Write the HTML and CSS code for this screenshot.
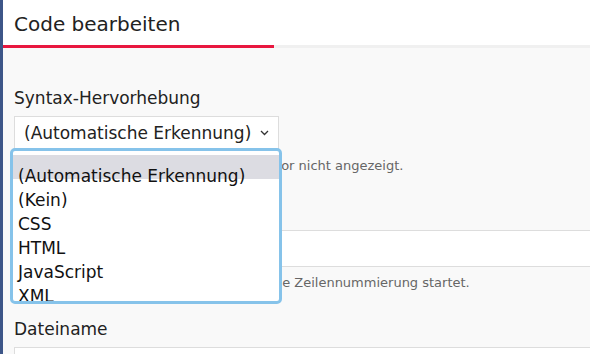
FILE: index.html
```html
<!DOCTYPE html>
<html lang="de">
<head>
<meta charset="utf-8">
<title>Code bearbeiten</title>
<link rel="stylesheet" href="styles.css">
</head>
<body>
<div class="shell">
  <div class="sidebar"></div>
  <main class="main">
    <header class="header">
      <h1 class="title">Code bearbeiten</h1>
    </header>
    <div class="tabline"><span class="tab-active"></span><span class="tab-rest"></span></div>
    <form class="form">
      <div class="field">
        <label class="label">Syntax-Hervorhebung</label>
        <div class="select">
          <span class="select-value">(Automatische Erkennung)</span>
          <svg class="chevron" width="9" height="6" viewBox="0 0 9 6"><path d="M1 1l3.5 3.5L8 1" fill="none" stroke="#333" stroke-width="1.3"/></svg>
        </div>
        <div class="listbox">
          <div class="option">(Automatische Erkennung)</div>
          <div class="option">(Kein)</div>
          <div class="option">CSS</div>
          <div class="option">HTML</div>
          <div class="option">JavaScript</div>
          <div class="option">XML</div>
        </div>
        <p class="help">Bei „Kein“ wird die Hervorhebung im Editor nicht angezeigt.</p>
      </div>
      <div class="field">
        <label class="label">Erste Zeilennummer</label>
        <div class="input input-tall"></div>
        <p class="help">Geben Sie die Startnummer an, ab der die Zeilennummierung startet.</p>
      </div>
      <div class="field">
        <label class="label">Dateiname</label>
        <div class="input"></div>
      </div>
    </form>
  </main>
</div>
</body>
</html>
```
FILE: styles.css
```css
html, body {
  margin: 0;
  padding: 0;
  overflow: hidden;
}
body {
  background: #f9f9f9;
  font-family: "DejaVu Sans", "Noto Sans", sans-serif;
  color: #222;
}
.shell {
  display: flex;
  min-height: 354px;
}
.sidebar {
  width: 3px;
  flex: none;
  background: #3d5688;
}
.main {
  flex: 1;
  min-width: 0;
}
.header {
  background: #fff;
  height: 45px;
  padding-left: 11px;
  display: flex;
  align-items: flex-end;
}
.title {
  margin: 0 0 8px;
  font-size: 20px;
  font-weight: normal;
  line-height: 26px;
  color: #222;
}
.tabline {
  display: flex;
  height: 3px;
}
.tab-active {
  width: 271px;
  background: #e8173f;
}
.tab-rest {
  flex: 1;
  background: #f0f0f0;
}
.form {
  padding: 39px 0 0 11px;
}
.field {
  position: relative;
  margin-bottom: 26px;
}
.label {
  display: block;
  font-size: 17px;
  line-height: 22px;
  margin-bottom: 7px;
  color: #222;
}
.select {
  box-sizing: border-box;
  width: 265px;
  height: 34px;
  background: #fff;
  border: 1px solid #ddd;
  display: flex;
  align-items: center;
  justify-content: space-between;
  padding: 0 9px;
  font-size: 17px;
}
.select-value {
  color: #222;
  white-space: nowrap;
}
.chevron {
  flex: none;
}
.listbox {
  position: absolute;
  left: -4px;
  top: 61px;
  box-sizing: border-box;
  width: 272px;
  height: 156px;
  border: 3px solid #86c3ea;
  border-radius: 5px;
  background: #fff;
  padding: 13px 0 0 5px;
  overflow: hidden;
  z-index: 2;
}
.listbox::before {
  content: "";
  position: absolute;
  left: 0;
  right: 0;
  top: 4px;
  height: 24px;
  background: #dcdce2;
}
.option {
  position: relative;
  font-size: 17px;
  line-height: 24px;
  color: #111;
  white-space: nowrap;
}
.help {
  margin: 7px 0 0;
  font-size: 13px;
  line-height: 18px;
  color: #666;
  white-space: nowrap;
}
.input {
  box-sizing: border-box;
  height: 34px;
  margin-right: -10px;
  background: #fff;
  border: 1px solid #ddd;
}
.input-tall {
  height: 37px;
}
```
